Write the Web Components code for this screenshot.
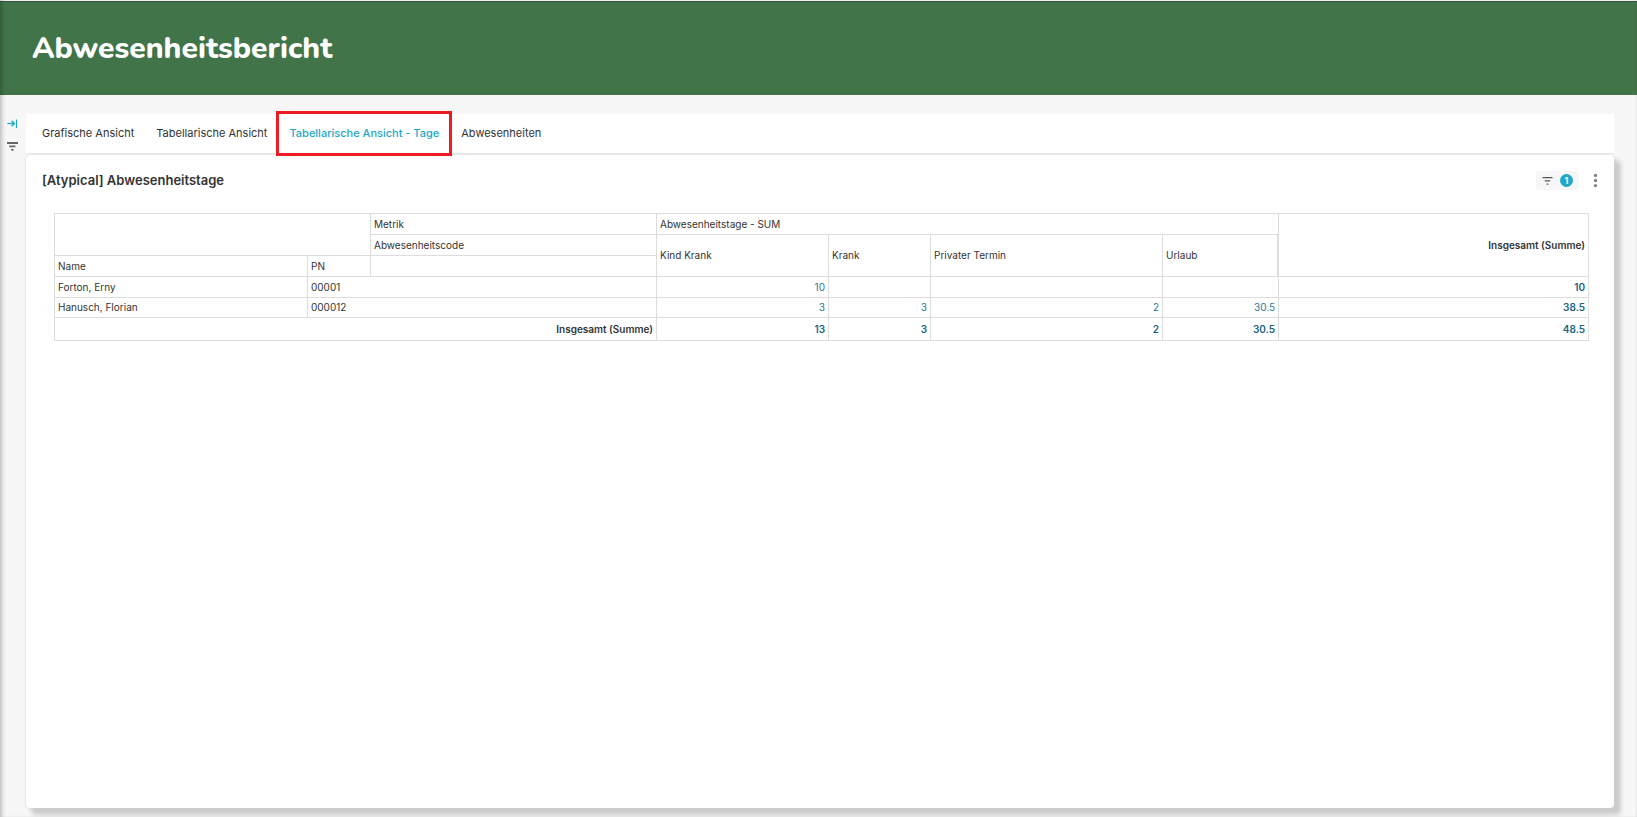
<!DOCTYPE html>
<html lang="de">
<head>
<meta charset="utf-8">
<meta name="viewport" content="width=device-width, initial-scale=1">
<title>Abwesenheitsbericht</title>
<style>
  body {
    margin: 0;
    font-family: Inter, "Liberation Sans", sans-serif;
    color: #333;
  }
</style>
</head>
<body>
<report-page>
  <report-header slot="header">Abwesenheitsbericht</report-header>
  <filter-rail slot="rail"></filter-rail>
  <tab-bar slot="tabs">
    <tab-item>Grafische Ansicht</tab-item>
    <tab-item>Tabellarische Ansicht</tab-item>
    <tab-item active>Tabellarische Ansicht - Tage</tab-item>
    <tab-item>Abwesenheiten</tab-item>
  </tab-bar>
  <chart-card>
    <span slot="title">[Atypical] Abwesenheitstage</span>
    <filter-badge slot="actions" count="1"></filter-badge>
    <more-button slot="actions"></more-button>
    <pivot-table></pivot-table>
  </chart-card>
</report-page>

<script>
// Page frame: header on top, icon rail beside the content
class ReportPage extends HTMLElement {
  constructor() {
    super();
    this.attachShadow({ mode: 'open' });
  }

  connectedCallback() {
    this.shadowRoot.innerHTML = `
      <style>
        :host {
          display: flex;
          flex-direction: column;
          position: relative;
          box-sizing: border-box;
          min-height: 100vh;
          padding-top: 1px;
          background: #f7f7f7;
        }

        /* soft shading along the window edges */
        :host::after {
          content: "";
          position: absolute;
          inset: 0;
          pointer-events: none;
          box-shadow: inset 4px 0 4px -2px rgba(0, 0, 0, 0.24),
            inset -2px 0 2px -1px rgba(0, 0, 0, 0.06);
        }

        .body {
          flex: 1;
          display: flex;
          padding: 19px 23px 9px 0;
        }

        main {
          flex: 1;
          min-width: 0;
          display: flex;
          flex-direction: column;
          gap: 2px;
        }

        ::slotted(chart-card) {
          flex: 1;
        }
      </style>
      <slot name="header"></slot>
      <div class="body">
        <slot name="rail"></slot>
        <main>
          <slot name="tabs"></slot>
          <slot></slot>
        </main>
      </div>
    `;
  }
}

class ReportHeader extends HTMLElement {
  constructor() {
    super();
    this.attachShadow({ mode: 'open' });
  }

  connectedCallback() {
    this.shadowRoot.innerHTML = `
      <style>
        :host {
          display: block;
          background: #417549;
          border-top: 1px solid #315a39;
        }

        h1 {
          margin: 0;
          padding: 25px 32px 24px;
          font: 800 30px/44px Nunito, "Open Sans", sans-serif;
          color: #fff;
        }
      </style>
      <h1><slot></slot></h1>
    `;
  }
}

// Narrow column with the expand and filter icons
class FilterRail extends HTMLElement {
  constructor() {
    super();
    this.attachShadow({ mode: 'open' });
  }

  connectedCallback() {
    this.shadowRoot.innerHTML = `
      <style>
        :host {
          display: flex;
          flex-direction: column;
          align-items: center;
          gap: 8px;
          width: 26px;
          padding-top: 2px;
        }

        button {
          display: flex;
          padding: 0;
          border: 0;
          background: none;
          cursor: pointer;
        }
      </style>
      <button type="button" aria-label="Filterleiste ausklappen">
        <svg width="16" height="15" viewBox="0 0 16 15" fill="none" stroke="#20a7c9">
          <path d="M2.4 7.5h6.6" stroke-width="1.3"></path>
          <path d="M6.6 4.9l2.7 2.6-2.7 2.6" stroke-width="1.5"></path>
          <path d="M11.5 3.5v8.5" stroke-width="1.2"></path>
        </svg>
      </button>
      <button type="button" aria-label="Filter">
        <svg width="16" height="16" viewBox="0 0 16 16" fill="#666">
          <path d="M2 3h11v2H2zM4.2 6.6h6.2v1.7H4.2zM6.2 10h2.4v1.7H6.2z"></path>
        </svg>
      </button>
    `;
  }
}

class TabBar extends HTMLElement {
  constructor() {
    super();
    this.attachShadow({ mode: 'open' });
  }

  connectedCallback() {
    this.shadowRoot.innerHTML = `
      <style>
        nav {
          display: flex;
          gap: 22px;
          padding: 0 16px;
        }

        :host {
          display: block;
          background: #fff;
          box-shadow: 0 1px 0 #ececec;
        }
      </style>
      <nav><slot></slot></nav>
    `;
  }
}

class TabItem extends HTMLElement {
  constructor() {
    super();
    this.attachShadow({ mode: 'open' });
  }

  connectedCallback() {
    this.shadowRoot.innerHTML = `
      <style>
        :host {
          display: block;
          position: relative;
        }

        a {
          display: block;
          font-size: 11px;
          line-height: 39px;
          color: #333;
          text-decoration: none;
          white-space: nowrap;
        }

        :host([active]) a {
          color: #20a7c9;
          font-weight: 500;
        }

        /* red marker frame round the active tab */
        :host([active])::after {
          content: "";
          position: absolute;
          inset: -3px -13px;
          border: 3px solid #ed1c24;
          z-index: 1;
          pointer-events: none;
        }
      </style>
      <a href="#"><slot></slot></a>
    `;
  }
}

class ChartCard extends HTMLElement {
  constructor() {
    super();
    this.attachShadow({ mode: 'open' });
  }

  connectedCallback() {
    this.shadowRoot.innerHTML = `
      <style>
        :host {
          display: block;
          background: #fff;
          border-radius: 4px;
          box-shadow: 6px 6px 4px 1px #ccc, 0 0 3px rgba(0, 0, 0, 0.16);
        }

        header {
          display: flex;
          align-items: center;
          gap: 14px;
          padding: 16px 16px 0;
        }

        h2 {
          flex: 1;
          margin: 0;
          font-size: 13px;
          line-height: 19px;
          font-weight: 600;
        }

        .content {
          padding: 23px 26px 0 28px;
        }
      </style>
      <header>
        <h2><slot name="title"></slot></h2>
        <slot name="actions"></slot>
      </header>
      <div class="content"><slot></slot></div>
    `;
  }
}

class FilterBadge extends HTMLElement {
  constructor() {
    super();
    this.attachShadow({ mode: 'open' });
  }

  connectedCallback() {
    this.shadowRoot.innerHTML = `
      <style>
        :host {
          display: block;
        }

        button {
          display: flex;
          align-items: center;
          gap: 7px;
          height: 19px;
          padding: 0 6px;
          border: 0;
          border-radius: 3px;
          background: #f7f7f7;
          font-family: inherit;
          cursor: pointer;
        }

        .count {
          width: 13px;
          height: 13px;
          border-radius: 50%;
          background: #20a7c9;
          color: #fff;
          font-size: 9px;
          line-height: 13px;
          font-weight: 700;
          text-align: center;
        }
      </style>
      <button type="button" aria-label="Aktive Filter">
        <svg width="11" height="10" viewBox="0 0 11 10" fill="#555">
          <path d="M.5 1h10v1.3H.5zM2.8 4.2h5.4v1.3H2.8zM4.6 7.4h1.8v1.4H4.6z"></path>
        </svg>
        <span class="count">${this.getAttribute('count')}</span>
      </button>
    `;
  }
}

class MoreButton extends HTMLElement {
  constructor() {
    super();
    this.attachShadow({ mode: 'open' });
  }

  connectedCallback() {
    this.shadowRoot.innerHTML = `
      <style>
        :host {
          display: block;
        }

        button {
          display: flex;
          padding: 0;
          border: 0;
          background: none;
          cursor: pointer;
        }
      </style>
      <button type="button" aria-label="Weitere Optionen">
        <svg width="5" height="15" viewBox="0 0 5 15" fill="#808589">
          <circle cx="2.5" cy="2.4" r="1.7"></circle>
          <circle cx="2.5" cy="7.5" r="1.7"></circle>
          <circle cx="2.5" cy="12.6" r="1.7"></circle>
        </svg>
      </button>
    `;
  }
}

class PivotTable extends HTMLElement {
  constructor() {
    super();
    this.attachShadow({ mode: 'open' });
    this.columns = [253, 63, 286, 172, 102, 232, 116, 310];
    this.rows = [
      { name: 'Forton, Erny', pn: '00001', values: ['10', '', '', ''], total: '10' },
      { name: 'Hanusch, Florian', pn: '000012', values: ['3', '3', '2', '30.5'], total: '38.5' },
    ];
    this.totals = ['13', '3', '2', '30.5', '48.5'];
  }

  connectedCallback() {
    this.shadowRoot.innerHTML = `
      <style>
        :host {
          display: block;
        }

        table {
          width: 100%;
          table-layout: fixed;
          border-collapse: collapse;
          font-size: 10px;
          line-height: 11px;
        }

        th,
        td {
          height: 12px;
          padding: 4px 3px;
          border: 1px solid #ddd;
          font-weight: 400;
          text-align: left;
        }

        /* second rule beside the totals column */
        .last {
          box-shadow: inset -1px 0 #ddd;
        }

        td {
          color: #2a7a96;
          text-align: right;
        }

        .sum {
          color: #333;
          font-weight: 600;
          text-align: right;
        }

        td.total {
          color: #1a6481;
          font-weight: 600;
        }

        tbody tr:last-child > * {
          height: 11px;
        }

        tfoot th,
        tfoot td {
          height: 14px;
        }
      </style>
      <table>
        <colgroup>
          ${this.columns.map((width) => `<col style="width: ${width}px">`).join('')}
        </colgroup>
        <thead>
          <tr>
            <th colspan="2" rowspan="2"></th>
            <th>Metrik</th>
            <th colspan="4">Abwesenheitstage - SUM</th>
            <th class="sum" rowspan="3">Insgesamt (Summe)</th>
          </tr>
          <tr>
            <th>Abwesenheitscode</th>
            <th rowspan="2">Kind Krank</th>
            <th rowspan="2">Krank</th>
            <th rowspan="2">Privater Termin</th>
            <th rowspan="2" class="last">Urlaub</th>
          </tr>
          <tr>
            <th>Name</th>
            <th>PN</th>
            <th></th>
          </tr>
        </thead>
        <tbody>
          ${this.rows.map((row) => `
            <tr>
              <th>${row.name}</th>
              <th colspan="2">${row.pn}</th>
              ${row.values.map((value) => `<td>${value}</td>`).join('')}
              <td class="total">${row.total}</td>
            </tr>
          `).join('')}
        </tbody>
        <tfoot>
          <tr>
            <th class="sum" colspan="3">Insgesamt (Summe)</th>
            ${this.totals.map((value) => `<td class="total">${value}</td>`).join('')}
          </tr>
        </tfoot>
      </table>
    `;
  }
}

customElements.define('report-page', ReportPage);
customElements.define('report-header', ReportHeader);
customElements.define('filter-rail', FilterRail);
customElements.define('tab-bar', TabBar);
customElements.define('tab-item', TabItem);
customElements.define('chart-card', ChartCard);
customElements.define('filter-badge', FilterBadge);
customElements.define('more-button', MoreButton);
customElements.define('pivot-table', PivotTable);
</script>
</body>
</html>
